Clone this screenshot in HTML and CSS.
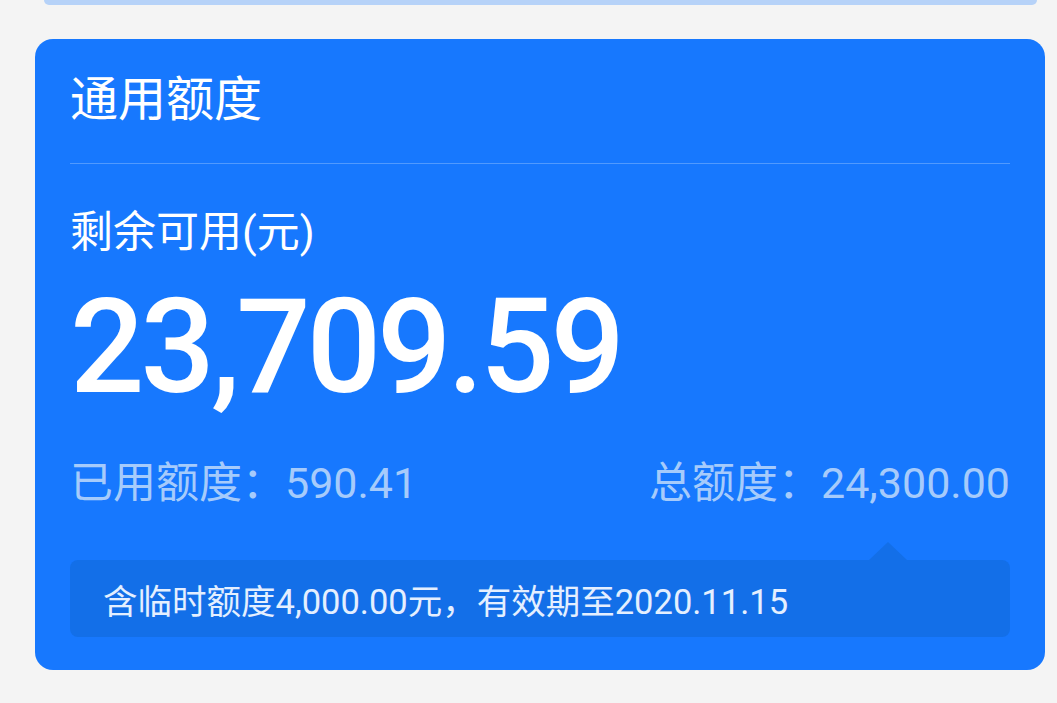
FILE: index.html
```html
<!DOCTYPE html>
<html lang="zh-CN">
<head>
<meta charset="utf-8">
<link rel="stylesheet" href="styles.css">
</head>
<body>
<div class="prev-card"></div>
<section class="card">
  <h2 class="title">通用额度</h2>
  <div class="divider"></div>
  <div class="label">剩余可用(元)</div>
  <div class="amount">23,709.59</div>
  <div class="stats">
    <span class="stat">已用额度：590.41</span>
    <span class="stat">总额度：24,300.00</span>
  </div>
  <div class="notice">
    <span class="caret"></span>
    含临时额度4,000.00元，有效期至2020.11.15
  </div>
</section>
</body>
</html>
```
FILE: styles.css
```css
html, body {
  margin: 0;
  padding: 0;
}
body {
  width: 1057px;
  height: 703px;
  background: #f4f4f4;
  font-family: Roboto, "Noto Sans CJK SC", sans-serif;
  overflow: hidden;
}
.prev-card {
  height: 5px;
  margin: 0 20px 0 44px;
  background: #b6d2f8;
  border-radius: 0 0 8px 8px;
}
.card {
  margin: 34px 12px 0 35px;
  height: 631px;
  box-sizing: border-box;
  padding: 31px 35px 0 35px;
  background: #1778fe;
  border-radius: 18px;
  color: #fff;
  display: flex;
  flex-direction: column;
}
.title {
  margin: 0;
  font-size: 48px;
  font-weight: 400;
  line-height: 60px;
}
.divider {
  margin-top: 33px;
  height: 1px;
  background: rgba(255, 255, 255, 0.25);
}
.label {
  margin-top: 44px;
  font-size: 43px;
  line-height: 48px;
}
.amount {
  margin-top: 26px;
  font-size: 131px;
  font-weight: 500;
  line-height: 130px;
  letter-spacing: -4px;
}
.stats {
  margin-top: 43px;
  display: flex;
  justify-content: space-between;
  font-size: 43px;
  line-height: 56px;
  color: #a6cbfb;
}
.notice {
  position: relative;
  margin-top: 49px;
  padding: 0 33px;
  height: 77px;
  display: flex;
  align-items: center;
  background: #136fe8;
  border-radius: 8px;
  font-size: 34.5px;
  color: #e4efff;
}
.caret {
  position: absolute;
  top: -18px;
  right: 103px;
  width: 0;
  height: 0;
  border-left: 19px solid transparent;
  border-right: 19px solid transparent;
  border-bottom: 18px solid #136fe8;
}
```
